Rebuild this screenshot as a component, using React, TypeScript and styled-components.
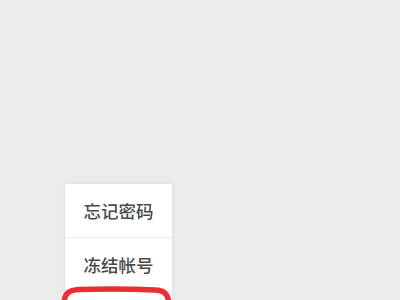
import React from "react";
import styled, { createGlobalStyle } from "styled-components";

const Global = createGlobalStyle`
  html, body { margin: 0; padding: 0; background: #ebebeb; }
  body { width: 400px; height: 300px; overflow: hidden; font-family: "Noto Sans CJK SC", "Noto Sans", sans-serif; }
`;

const Page = styled.div`
  width: 400px;
  height: 300px;
  background: #ebebeb;
  padding: 184px 0 0 65px;
  box-sizing: border-box;
  overflow: hidden;
  position: relative;
`;

const Menu = styled.ul`
  list-style: none;
  margin: 0;
  padding: 0;
  width: 107px;
  background: #ffffff;
  box-shadow: 0 0 4px rgba(0, 0, 0, 0.08);
  position: relative;
`;

const Item = styled.li<{ $last?: boolean }>`
  height: 54px;
  display: flex;
  align-items: center;
  justify-content: center;
  font-size: 17.5px;
  font-weight: 500;
  color: #4a4a4a;
  border-bottom: ${(p) => (p.$last ? "none" : "1px solid #ededed")};
  box-sizing: border-box;
`;

const Scribble = styled.svg`
  position: absolute;
  left: 55px;
  top: 280px;
  width: 125px;
  height: 20px;
  pointer-events: none;
`;

export default function App() {
  return (
    <>
      <Global />
      <Page>
        <Menu>
          <Item>忘记密码</Item>
          <Item>冻结帐号</Item>
          <Item $last />
        </Menu>
        <Scribble viewBox="0 0 125 20">
          <path
            d="M9 22 C10 13, 14 10, 24 9.5 C50 8.5, 80 9, 100 10 C108 10.5, 112 12, 114 22"
            fill="none"
            stroke="#ec2d36"
            strokeWidth="5.5"
            strokeLinecap="round"
          />
        </Scribble>
      </Page>
    </>
  );
}
